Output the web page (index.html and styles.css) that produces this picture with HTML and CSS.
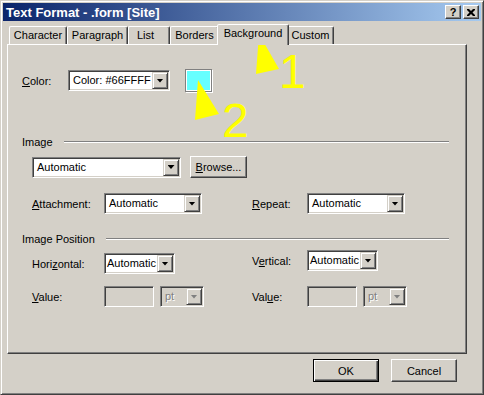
FILE: index.html
```html
<!doctype html>
<html lang="en">
<head>
	<meta charset="UTF-8">
	<title>Text Format - .form [Site]</title>
	<link rel="stylesheet" href="styles.css">
</head>
<body>
	<div class="dlg">
		<div class="cap">
			<span class="cap-title">Text Format - .form [Site]</span>
			<span class="cap-btn">?</span>
			<span class="cap-btn"><svg width="8" height="7" viewBox="0 0 8 7"><path d="M0 0h2l2 2 2-2h2v1L5.5 3.5 8 6v1H6L4 5 2 7H0V6l2.5-2.5L0 1z"/></svg></span>
		</div>
		<ul class="tabs">
			<li class="tab t-char">Character</li>
			<li class="tab t-para">Paragraph</li>
			<li class="tab t-list">List</li>
			<li class="tab t-bord">Borders</li>
			<li class="tab t-back on">Background</li>
			<li class="tab t-cust">Custom</li>
		</ul>
		<div class="panel">
			<div class="row-color">
				<label class="lbl-color"><u>C</u>olor:</label>
				<div class="combo w-color"><span class="val">Color: #66FFFF</span><span class="drop"></span></div>
				<span class="swatch"></span>
			</div>

			<div class="group"><span>Image</span><span class="rule"></span></div>
			<div class="row-image">
				<div class="combo w-image"><span class="val">Automatic</span><span class="drop"></span></div>
				<span class="btn browse"><u>B</u>rowse...</span>
			</div>
			<div class="pair attach">
				<div class="field">
					<label class="lbl-l"><u>A</u>ttachment:</label>
					<div class="combo w-wide"><span class="val">Automatic</span><span class="drop"></span></div>
				</div>
				<div class="field">
					<label class="lbl-r"><u>R</u>epeat:</label>
					<div class="combo w-wide"><span class="val">Automatic</span><span class="drop"></span></div>
				</div>
			</div>

			<div class="group group-pos"><span>Image Position</span><span class="rule"></span></div>
			<div class="pair pos">
				<div class="field low">
					<label class="lbl-l">Hori<u>z</u>ontal:</label>
					<div class="combo w-short"><span class="val">Automatic</span><span class="drop"></span></div>
				</div>
				<div class="field">
					<label class="lbl-r">V<u>e</u>rtical:</label>
					<div class="combo w-short"><span class="val">Automatic</span><span class="drop"></span></div>
				</div>
			</div>
			<div class="pair vals">
				<div class="field">
					<label class="lbl-l"><u>V</u>alue:</label>
					<span class="box"></span>
					<div class="combo w-unit off"><span class="val">pt</span><span class="drop"></span></div>
				</div>
				<div class="field">
					<label class="lbl-r">Val<u>u</u>e:</label>
					<span class="box"></span>
					<div class="combo w-unit off"><span class="val">pt</span><span class="drop"></span></div>
				</div>
			</div>
		</div>
		<div class="foot">
			<span class="btn def">OK</span>
			<span class="btn">Cancel</span>
		</div>
	</div>

	<svg class="marks" width="484" height="395" viewBox="0 0 484 395">
		<polygon points="259,34 256,74 279,69"/>
		<text x="279" y="88">1</text>
		<polygon points="198,80 195,120 219,114"/>
		<text x="222" y="137">2</text>
	</svg>
</body>
</html>
```

FILE: styles.css
```css
*{margin:0;padding:0;box-sizing:border-box;}
ul{list-style:none;}
body{
	position:relative;
	background:#d4d0c8;
	font:11px "Liberation Sans",Arial,sans-serif;
	color:#000;
}
u{text-decoration:underline;text-underline-offset:1px;}

/* window frame */
.dlg{
	width:484px;
	height:395px;
	background:#d4d0c8;
	border:1px solid;
	border-color:#d4d0c8 #404040 #404040 #d4d0c8;
	box-shadow:inset 1px 1px #fff,inset -1px -1px #808080;
	padding:2px;
}
.cap{
	display:flex;
	align-items:center;
	height:18px;
	padding:0 2px 0 3px;
	background:linear-gradient(to right,#0a246a,#a6caf0);
	color:#fff;
	font-weight:bold;
}
.cap-title{flex:1;font-size:13px;}
.cap-btn{
	display:flex;
	align-items:center;
	justify-content:center;
	width:16px;
	height:14px;
	margin-left:2px;
	background:#d4d0c8;
	color:#000;
	border:1px solid;
	border-color:#fff #404040 #404040 #fff;
	box-shadow:inset -1px -1px #808080;
	font-size:11px;
	line-height:12px;
}

/* tabs */
.tabs{
	display:flex;
	align-items:flex-end;
	height:23px;
	padding-left:6px;
}
.tab{
	height:18px;
	border:1px solid;
	border-bottom:0;
	border-color:#fff #404040 transparent #fff;
	border-radius:2px 2px 0 0;
	box-shadow:inset -1px 0 #808080;
	text-align:center;
	line-height:17px;
	white-space:nowrap;
}
.t-char{width:58px;}
.t-para{width:61px;}
.t-list{width:42px;text-align:left;padding-left:8px;}
.t-bord{width:49px;}
.t-back{width:72px;}
.t-cust{width:47px;}
.tab.on{
	position:relative;
	z-index:1;
	height:21px;
	margin:0 -2px -1px;
	background:#d4d0c8;
	line-height:16px;
}

.panel{
	width:460px;
	height:310px;
	margin-left:4px;
	border:1px solid;
	border-color:#fff #404040 #404040 #fff;
	box-shadow:inset -1px -1px #808080;
}

/* rows */
.row-color{
	display:flex;
	align-items:center;
	margin:24px 0 0 14px;
}
.lbl-color{width:46px;}
.swatch{
	width:27px;
	height:23px;
	margin-left:15px;
	background:#66ffff;
	border:1px solid #808080;
	box-shadow:inset 1px 1px #fff,inset -1px -1px #fff,1px 1px #fff;
}
.group{
	display:flex;
	align-items:center;
	height:13px;
	margin:43px 17px 0 14px;
}
.group-pos{margin-top:18px;}
.rule{
	flex:1;
	height:2px;
	margin-left:11px;
	border-top:1px solid #808080;
	border-bottom:1px solid #fff;
}
.row-image{
	display:flex;
	align-items:center;
	margin:8px 0 0 24px;
}
.pair{
	display:grid;
	grid-template-columns:218px auto;
	align-items:start;
	margin-left:24px;
}
.attach{margin-top:15px;}
.pos{margin-top:5px;}
.vals{margin-top:12px;}
.field{display:flex;align-items:center;}
.field.low{margin-top:3px;}
.lbl-l{width:72px;}
.lbl-r{width:57px;padding-left:2px;}

/* combo box */
.combo{
	display:flex;
	height:21px;
	padding:1px;
	background:#fff;
	border:1px solid;
	border-color:#808080 #fff #fff #808080;
	box-shadow:inset 1px 1px #404040,inset -1px -1px #d4d0c8;
}
.combo .val{
	flex:1;
	padding-left:3px;
	line-height:17px;
	white-space:nowrap;
	overflow:hidden;
}
.combo .drop{
	display:flex;
	align-items:center;
	justify-content:center;
	width:16px;
	height:17px;
	background:#d4d0c8;
	border:1px solid;
	border-color:#d4d0c8 #404040 #404040 #d4d0c8;
	box-shadow:inset 1px 1px #fff,inset -1px -1px #808080;
}
.combo .drop::after{
	content:"";
	width:7px;
	height:4px;
	background:#000;
	clip-path:polygon(0 0,100% 0,50% 100%);
}
.w-color{width:102px;}
.w-image{width:149px;}
.w-wide{width:98px;}
.w-short{width:71px;}
.w-short .val{padding-left:1px;}
.w-unit{width:44px;margin-left:6px;}
.combo.off{background:#d4d0c8;}
.combo.off .val{color:#808080;text-shadow:1px 1px #fff;}
.combo.off .drop::after{background:#808080;filter:drop-shadow(1px 1px #fff);}
.box{
	width:50px;
	height:21px;
	background:#d4d0c8;
	border:1px solid;
	border-color:#808080 #fff #fff #808080;
	box-shadow:inset 1px 1px #404040,inset -1px -1px #d4d0c8;
}

/* push buttons */
.btn{
	display:flex;
	align-items:center;
	justify-content:center;
	width:66px;
	height:23px;
	background:#d4d0c8;
	border:1px solid;
	border-color:#fff #404040 #404040 #fff;
	box-shadow:inset -1px -1px #808080;
}
.btn.browse{width:57px;height:22px;margin-left:9px;}
.btn.def{
	border-color:#000;
	box-shadow:inset 1px 1px #fff,inset -1px -1px #404040,inset -2px -2px #808080;
}
.foot{
	display:flex;
	justify-content:flex-end;
	gap:12px;
	margin-top:5px;
	padding-right:24px;
}

/* yellow callouts drawn over the dialog */
.marks{
	position:absolute;
	left:0;
	top:0;
	fill:#ff0;
	pointer-events:none;
}
.marks text{font:48px "Liberation Sans",Arial,sans-serif;}
```
